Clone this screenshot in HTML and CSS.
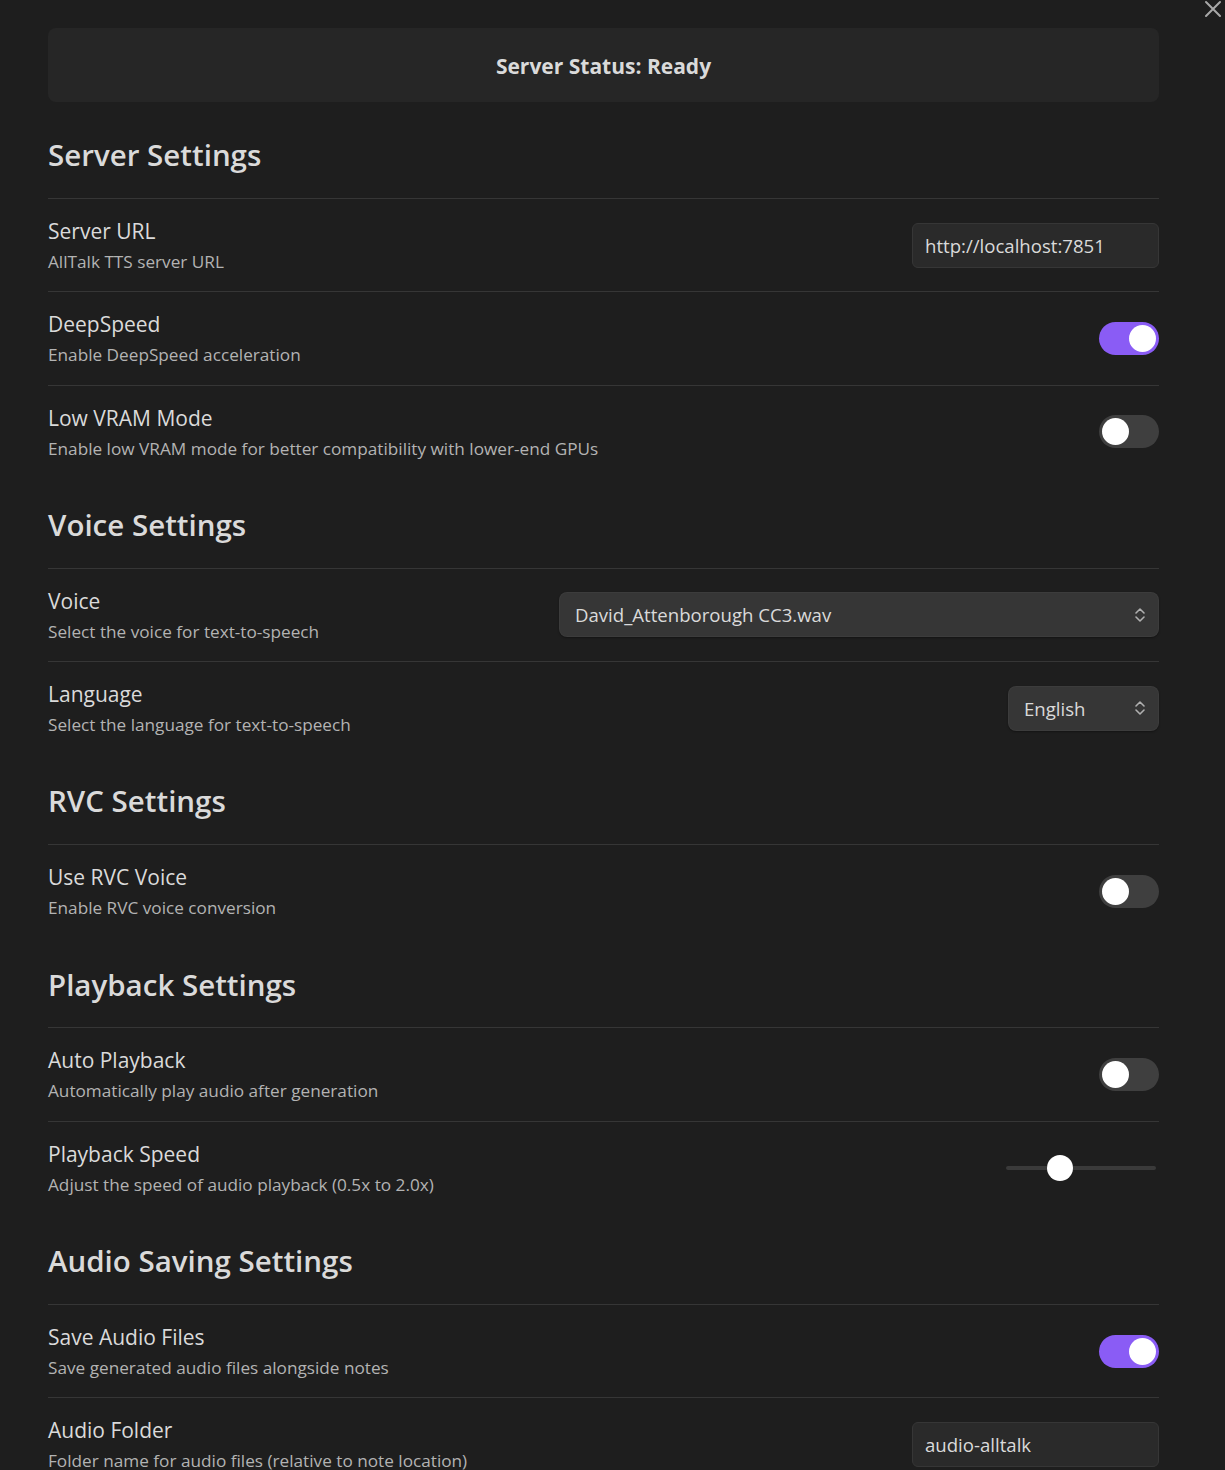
FILE: index.html
```html
<!DOCTYPE html>
<html lang="en">
<head>
<meta charset="utf-8">
<title>AllTalk TTS Settings</title>
<link rel="stylesheet" href="styles.css">
</head>
<body>
<div class="close" aria-label="Close">
  <svg width="18" height="18" viewBox="0 0 18 18"><path d="M2 2 L16 16 M16 2 L2 16" stroke="#a8a8a8" stroke-width="2" stroke-linecap="round" fill="none"/></svg>
</div>
<main class="panel">
  <div class="status">Server Status: Ready</div>

  <h3 class="heading">Server Settings</h3>
  <div class="row">
    <div class="info"><div class="name">Server URL</div><div class="desc">AllTalk TTS server URL</div></div>
    <div class="control"><input class="text" type="text" value="http://localhost:7851"></div>
  </div>
  <div class="row">
    <div class="info"><div class="name">DeepSpeed</div><div class="desc">Enable DeepSpeed acceleration</div></div>
    <div class="control"><div class="toggle on"><span class="knob"></span></div></div>
  </div>
  <div class="row">
    <div class="info"><div class="name">Low VRAM Mode</div><div class="desc">Enable low VRAM mode for better compatibility with lower-end GPUs</div></div>
    <div class="control"><div class="toggle"><span class="knob"></span></div></div>
  </div>

  <h3 class="heading">Voice Settings</h3>
  <div class="row">
    <div class="info"><div class="name">Voice</div><div class="desc">Select the voice for text-to-speech</div></div>
    <div class="control"><div class="select wide"><span>David_Attenborough CC3.wav</span><svg class="chev" width="12" height="18" viewBox="0 0 12 18"><path d="M2 7 L6 3 L10 7 M2 11 L6 15 L10 11" stroke="#b0b0b0" stroke-width="1.6" fill="none" stroke-linecap="round" stroke-linejoin="round"/></svg></div></div>
  </div>
  <div class="row">
    <div class="info"><div class="name">Language</div><div class="desc">Select the language for text-to-speech</div></div>
    <div class="control"><div class="select narrow"><span>English</span><svg class="chev" width="12" height="18" viewBox="0 0 12 18"><path d="M2 7 L6 3 L10 7 M2 11 L6 15 L10 11" stroke="#b0b0b0" stroke-width="1.6" fill="none" stroke-linecap="round" stroke-linejoin="round"/></svg></div></div>
  </div>

  <h3 class="heading">RVC Settings</h3>
  <div class="row">
    <div class="info"><div class="name">Use RVC Voice</div><div class="desc">Enable RVC voice conversion</div></div>
    <div class="control"><div class="toggle"><span class="knob"></span></div></div>
  </div>

  <h3 class="heading">Playback Settings</h3>
  <div class="row">
    <div class="info"><div class="name">Auto Playback</div><div class="desc">Automatically play audio after generation</div></div>
    <div class="control"><div class="toggle"><span class="knob"></span></div></div>
  </div>
  <div class="row">
    <div class="info"><div class="name">Playback Speed</div><div class="desc">Adjust the speed of audio playback (0.5x to 2.0x)</div></div>
    <div class="control"><input class="slider" type="range" min="0.5" max="2" step="0.1" value="1"></div>
  </div>

  <h3 class="heading">Audio Saving Settings</h3>
  <div class="row">
    <div class="info"><div class="name">Save Audio Files</div><div class="desc">Save generated audio files alongside notes</div></div>
    <div class="control"><div class="toggle on"><span class="knob"></span></div></div>
  </div>
  <div class="row">
    <div class="info"><div class="name">Audio Folder</div><div class="desc">Folder name for audio files (relative to note location)</div></div>
    <div class="control"><input class="text" type="text" value="audio-alltalk"></div>
  </div>
</main>
</body>
</html>
```

FILE: styles.css
```css
* { box-sizing: border-box; }
html, body {
  margin: 0;
  background: #1e1e1e;
  color: #dadada;
  font-family: "Open Sans", "Noto Sans", sans-serif;
}
body { position: relative; }
.close {
  position: absolute;
  top: 0;
  right: 3px;
  width: 18px;
  height: 18px;
}
.panel {
  width: 1111px;
  margin-left: 48px;
  padding-top: 28px;
  padding-bottom: 40px;
}
.status {
  height: 74px;
  background: #262626;
  border-radius: 8px;
  display: flex;
  align-items: center;
  justify-content: center;
  font-weight: 700;
  font-size: 21px;
  padding-top: 2px;
  margin-bottom: 6px;
}
.heading {
  margin: 0;
  padding: 32px 0 27.85px;
  font-size: 29.5px;
  line-height: 30px;
  font-weight: 600;
  color: #dadada;
}
.row {
  border-top: 1px solid #363636;
  display: flex;
  align-items: center;
  justify-content: space-between;
  height: 93.33px;
}
.info {
  align-self: flex-start;
  padding-top: 17px;
}
.name {
  font-size: 21px;
  line-height: 30px;
  color: #dadada;
}
.desc {
  font-size: 17.2px;
  line-height: 30px;
  margin-top: 1px;
  color: #b3b3b3;
}
.control { display: flex; align-items: center; }
.text {
  width: 247px;
  height: 45px;
  background: #2a2a2a;
  border: 1px solid #363636;
  border-radius: 6px;
  color: #dadada;
  font-family: inherit;
  font-size: 18.6px;
  padding: 0 12px;
  outline: none;
}
.toggle {
  width: 60px;
  height: 33px;
  border-radius: 17px;
  background: #3f3f3f;
  position: relative;
}
.toggle .knob {
  position: absolute;
  top: 3px;
  left: 3px;
  width: 27px;
  height: 27px;
  border-radius: 50%;
  background: #ffffff;
}
.toggle.on { background: #8a5cf5; }
.toggle.on .knob { left: 30px; }
.select {
  height: 45px;
  background: #363636;
  border-radius: 8px;
  box-shadow: 0 1px 2px rgba(0,0,0,0.35), inset 0 0 0 1px rgba(255,255,255,0.03);
  display: flex;
  align-items: center;
  justify-content: space-between;
  padding: 0 13px 0 16px;
  font-size: 18.6px;
  color: #dadada;
}
.select.wide { width: 600px; }
.select.narrow { width: 151px; }
.chev { flex: none; }
.slider {
  -webkit-appearance: none;
  appearance: none;
  width: 150px;
  height: 26px;
  margin: 0 3px 0 0;
  background: transparent;
}
.slider::-webkit-slider-runnable-track {
  height: 4px;
  background: #3a3a3a;
  border-radius: 2px;
}
.slider::-webkit-slider-thumb {
  -webkit-appearance: none;
  width: 26px;
  height: 26px;
  margin-top: -11px;
  border-radius: 50%;
  background: #ffffff;
  border: none;
}
```
